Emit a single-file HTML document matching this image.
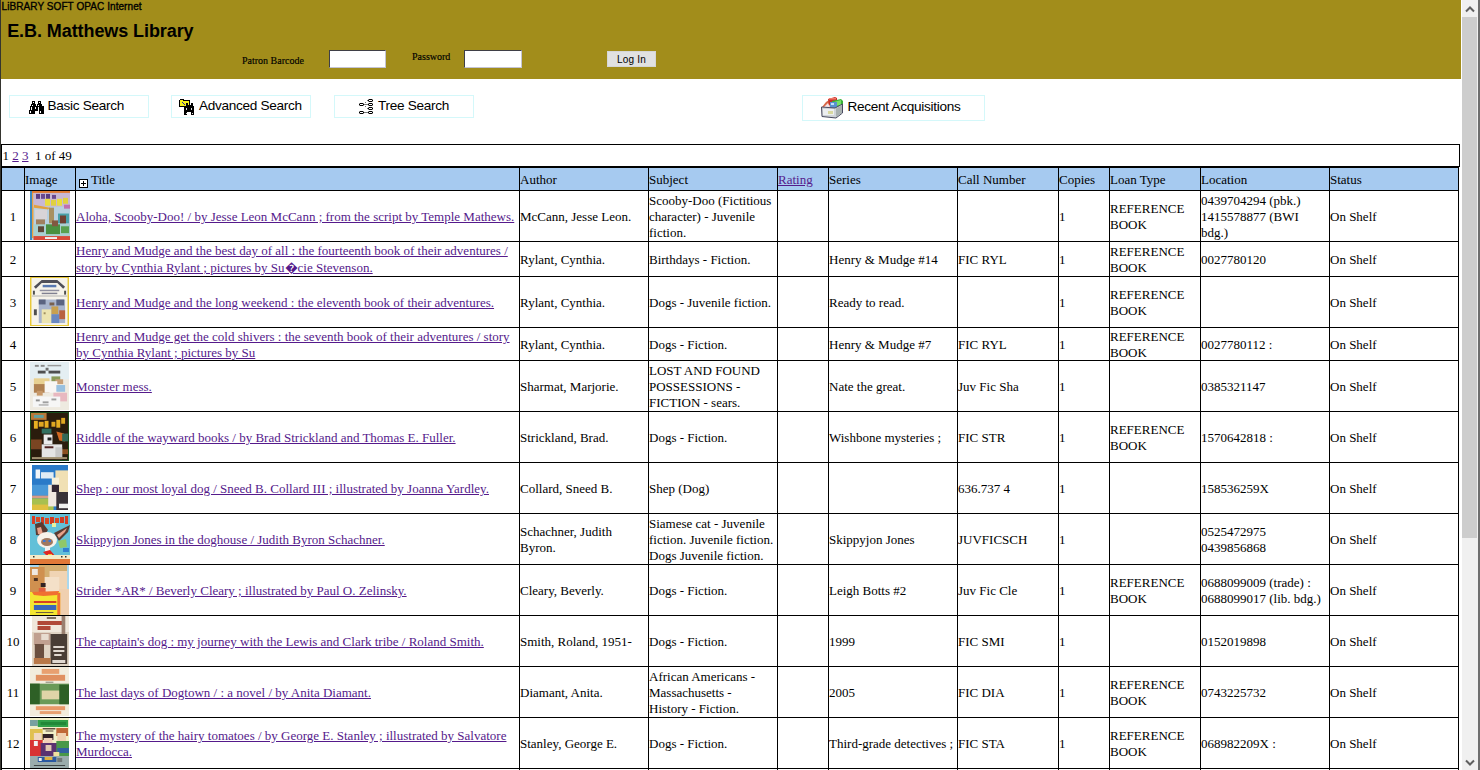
<!DOCTYPE html>
<html><head><meta charset="utf-8"><title>E.B. Matthews Library</title>
<style>
html,body{margin:0;padding:0;background:#fff;overflow:hidden;width:1480px;height:770px;}
body{position:relative;font-family:"Liberation Serif",serif;color:#000;}
.abs{position:absolute;}
#strip{left:0;top:0;width:1px;height:770px;background:#35352f;}
#hdr{left:1px;top:0;width:1460px;height:79px;background:#a28d1b;}
.sans{font-family:"Liberation Sans",sans-serif;}
#opac{left:1.6px;top:1px;font:10px/12px "Liberation Sans",sans-serif;letter-spacing:0.07px;-webkit-text-stroke:0.35px #000;white-space:nowrap;}
#lib{left:7.2px;top:20px;font:bold 18px/22px "Liberation Sans",sans-serif;letter-spacing:-0.08px;white-space:nowrap;}
.lbl{font:10px/12px "Liberation Serif",serif;white-space:nowrap;-webkit-text-stroke:0.15px #000;}
.inp{background:#fff;box-sizing:border-box;width:57px;height:18px;border-top:1px solid #3f3f46;border-left:1px solid #3f3f46;border-bottom:1px solid #c4c4d4;border-right:1px solid #c4c4d4;}
#btn{left:607px;top:51px;width:49px;height:16px;background:#e1e1e1;box-sizing:border-box;border:1px solid #d6d6d6;font:10px/15px "Liberation Sans",sans-serif;letter-spacing:0.2px;text-align:center;}
.sb{box-sizing:border-box;border:1px solid #d4f8fa;height:23px;font:13.6px/15px "Liberation Sans",sans-serif;letter-spacing:-0.3px;white-space:nowrap;}
.sb span{position:absolute;top:2px;}
.sb svg{position:absolute;}
#pager{left:1px;top:144px;width:1459px;height:23px;box-sizing:border-box;border:1px solid #000;font:13px/16px "Liberation Serif",serif;white-space:pre;}
#pager span{position:absolute;left:0.5px;top:3px;}
a{color:#551a8b;text-decoration:underline;}
#tbl{position:absolute;left:1px;top:167px;border-collapse:separate;border-spacing:0;table-layout:fixed;width:1458px;border-left:1px solid #000;border-top:1px solid #000;font:13px/16px "Liberation Serif",serif;}
#tbl td,#tbl th{box-sizing:border-box;padding:0;border-right:1px solid #000;border-bottom:1px solid #000;vertical-align:middle;text-align:left;white-space:nowrap;overflow:visible;font-weight:normal;}
#tbl th{background:#a6caf0;padding-top:2px;}
#tbl td.n{text-align:center;}
#tbl span.t{position:relative;top:1px;}
#tbl td.im{text-align:left;vertical-align:top;line-height:0;}
#tbl td.im svg{display:block;}
#sbar{left:1461px;top:0;width:19px;height:770px;background:#fff;}
#track{left:1462px;top:0;width:16px;height:770px;background:#f0f0f0;}
#thumb{left:1462px;top:17px;width:15px;height:521px;background:#cdcdcd;}
#sedge{left:1478px;top:0;width:2px;height:770px;background:#6e6e6e;}
</style></head><body>
<svg width="0" height="0" style="position:absolute"><defs><filter id="bl" x="0" y="0" width="100%" height="100%"><feGaussianBlur stdDeviation="0.6" edgeMode="duplicate"/></filter></defs></svg>
<div id="hdr" class="abs"></div>
<div id="opac" class="abs">LiBRARY SOFT OPAC Internet</div>
<div id="lib" class="abs">E.B. Matthews Library</div>
<div class="abs lbl" style="left:242px;top:55px;">Patron Barcode</div>
<div class="abs inp" style="left:329px;top:50px;"></div>
<div class="abs lbl" style="left:412px;top:51px;">Password</div>
<div class="abs inp" style="left:464px;top:50px;width:58px;"></div>
<div id="btn" class="abs">Log In</div>

<div class="abs sb" style="left:9px;top:95px;width:140px;">
<svg style="left:19px;top:5px" width="15" height="13" viewBox="0 0 15 13" shape-rendering="crispEdges">
<g fill="#000"><rect x="3" y="0" width="3" height="3"/><rect x="2" y="3" width="5" height="2"/><rect x="1" y="5" width="6" height="4"/><rect x="0" y="9" width="6" height="4"/><rect x="9" y="0" width="3" height="3"/><rect x="8" y="3" width="5" height="2"/><rect x="8" y="5" width="7" height="4"/><rect x="10" y="9" width="5" height="4"/><rect x="6" y="5" width="3" height="5"/></g>
<g fill="#fff"><rect x="4" y="1" width="1" height="1"/><rect x="10" y="1" width="1" height="1"/><rect x="3" y="4" width="1" height="1"/><rect x="9" y="4" width="1" height="1"/><rect x="2" y="6" width="1" height="3"/><rect x="6" y="6" width="1" height="2"/><rect x="9" y="6" width="1" height="3"/><rect x="1" y="10" width="1" height="2"/><rect x="11" y="10" width="1" height="2"/></g>
</svg>
<span style="left:37.5px">Basic Search</span></div>

<div class="abs sb" style="left:171px;top:95px;width:140px;">
<svg style="left:7px;top:3px" width="17" height="16" viewBox="0 0 17 16" shape-rendering="crispEdges">
<path fill="#000" d="M1 0h4v1h6v7h-11v-7h1z"/>
<path fill="#f2ee1a" d="M1 1h3v1h6v5h-9z"/>
<path fill="#2222aa" d="M3 3h1v1h-1zM4 4h1v1h-1zM5 5h1v1h-1z"/>
<path fill="#000" d="M7 4h2v2h3v-2h2v3h1v9h-3v-3h-4v3h-3v-9h2z"/>
<path fill="#ddd" d="M7 9h1v2h-1zM12 9h1v2h-1zM7 14h1v1h-1zM13 14h1v1h-1z"/>
</svg>
<span style="left:27px">Advanced Search</span></div>

<div class="abs sb" style="left:334px;top:95px;width:140px;">
<svg style="left:24px;top:3px" width="14" height="15" viewBox="0 0 14 15" shape-rendering="crispEdges">
<g fill="#000"><rect x="0" y="4" width="5" height="3"/><rect x="0" y="12" width="5" height="3"/><rect x="9" y="0" width="5" height="3"/><rect x="9" y="4" width="5" height="3"/><rect x="9" y="8" width="5" height="3"/><rect x="9" y="12" width="5" height="3"/></g>
<g fill="#fff"><rect x="1" y="5" width="3" height="1"/><rect x="1" y="13" width="3" height="1"/><rect x="10" y="1" width="3" height="1"/><rect x="10" y="5" width="3" height="1"/><rect x="10" y="9" width="3" height="1"/><rect x="10" y="13" width="3" height="1"/></g>
<g fill="#fff" opacity="0.55"><rect x="0" y="4" width="1" height="1"/><rect x="4" y="4" width="1" height="1"/><rect x="0" y="6" width="1" height="1"/><rect x="4" y="6" width="1" height="1"/><rect x="0" y="12" width="1" height="1"/><rect x="4" y="12" width="1" height="1"/><rect x="0" y="14" width="1" height="1"/><rect x="4" y="14" width="1" height="1"/><rect x="9" y="0" width="1" height="1"/><rect x="13" y="0" width="1" height="1"/><rect x="9" y="2" width="1" height="1"/><rect x="13" y="2" width="1" height="1"/><rect x="9" y="4" width="1" height="1"/><rect x="13" y="4" width="1" height="1"/><rect x="9" y="6" width="1" height="1"/><rect x="13" y="6" width="1" height="1"/><rect x="9" y="8" width="1" height="1"/><rect x="13" y="8" width="1" height="1"/><rect x="9" y="10" width="1" height="1"/><rect x="13" y="10" width="1" height="1"/><rect x="9" y="12" width="1" height="1"/><rect x="13" y="12" width="1" height="1"/><rect x="9" y="14" width="1" height="1"/><rect x="13" y="14" width="1" height="1"/></g>
<g fill="#777"><rect x="5" y="5" width="4" height="1"/><rect x="5" y="13" width="4" height="1"/><rect x="6" y="3" width="1" height="1"/><rect x="8" y="1" width="1" height="1"/><rect x="6" y="7" width="1" height="1"/><rect x="8" y="9" width="1" height="1"/></g>
</svg>
<span style="left:43px">Tree Search</span></div>

<div class="abs sb" style="left:802px;top:95px;width:183px;height:26px;">
<svg style="left:17px;top:1px" width="24" height="22" viewBox="0 0 24 22">
<polygon points="2,10 6,5 9,3 10,10" fill="#d86848"/><polygon points="4,10 8,6 10,10" fill="#f4e4e8"/>
<polygon points="8,2 15,0 17,1 17,7 9,8" fill="#c83028"/><rect x="9" y="1" width="7" height="1.5" fill="#f07868"/>
<polygon points="12,4 21,2 23,4 23,12 13,12" fill="#38b038"/><polygon points="14,5 21,3 21,8 14,9" fill="#78e068"/>
<rect x="10" y="5" width="7" height="7" fill="#5a90d0"/><rect x="11" y="6" width="3" height="2" fill="#c0e0f8"/>
<polygon points="1.5,10 15,11 22.5,7 22.5,16 16,21 2,19.5" fill="#d0d4d8" stroke="#4a4a60" stroke-width="1"/>
<polygon points="16,11.5 22,8 22,16 16,20" fill="#a8b0b0"/>
<rect x="3" y="12" width="11" height="6" fill="#eceef0"/><rect x="8" y="14" width="5" height="3" fill="#d8d8a0"/>
</svg>
<span style="left:44.5px;top:3px">Recent Acquisitions</span></div>

<div id="pager" class="abs"><span>1 <a>2</a> <a>3</a>  1 of 49</span></div>

<table id="tbl">
<colgroup><col style="width:23px"><col style="width:51px"><col style="width:444px"><col style="width:129px"><col style="width:129px"><col style="width:51px"><col style="width:129px"><col style="width:101px"><col style="width:51px"><col style="width:91px"><col style="width:129px"><col style="width:129px"></colgroup>
<tr style="height:23px"><th></th><th>Image</th><th><svg width="9" height="9" viewBox="0 0 9 9" style="vertical-align:-4px;margin:0 3px 0 3px" shape-rendering="crispEdges"><path fill="#000" d="M0 0h9v9h-9zM1 1v7h7v-7z"/><path fill="#fff" d="M1 1h7v7h-7z"/><path fill="#000" d="M4 2h1v5h-1zM2 4h5v1h-5z"/></svg>Title</th><th>Author</th><th>Subject</th><th><a>Rating</a></th><th>Series</th><th>Call Number</th><th>Copies</th><th>Loan Type</th><th>Location</th><th>Status</th></tr>
<tr style="height:51px"><td class="n"><span class="t">1</span></td><td class="im"><svg style="margin:0px 0 0 5px" width="40" height="49" viewBox="0 0 40 50" preserveAspectRatio="none"><g filter="url(#bl)"><rect width="40" height="50" fill="#b8d0e0"/><rect width="40" height="2" fill="#e07a30"/><rect x="0" y="0" width="2" height="50" fill="#3a8ac0"/><rect x="2" y="2" width="1.5" height="46" fill="#e8a040"/><rect x="3.5" y="2" width="36.5" height="14" fill="#c8b8d4"/><rect x="6" y="3" width="4" height="5" fill="#5a3a80"/><rect x="11" y="3" width="4" height="5" fill="#6a4a90"/><rect x="16" y="3" width="4" height="5" fill="#5a3a80"/><rect x="22" y="4" width="4" height="4" fill="#6a4a90"/><rect x="15" y="8" width="5" height="7" fill="#e8dc40"/><rect x="21" y="9" width="5" height="6" fill="#e0d040"/><rect x="27" y="8" width="5" height="7" fill="#e8dc40"/><rect x="33" y="7" width="5" height="6" fill="#e0d040"/><polygon points="4,14 20,17 18,19 4,17" fill="#e0a040"/><rect x="34" y="14" width="6" height="4" fill="#c070b0"/><rect x="5" y="19" width="12" height="10" fill="#d8d4d8"/><rect x="19" y="17" width="5" height="16" fill="#a89060"/><rect x="6" y="29" width="9" height="7" fill="#a08060"/><rect x="28" y="23" width="11" height="10" fill="#48a0a8"/><rect x="30" y="25" width="6" height="8" fill="#704030"/><rect x="3.5" y="34" width="36.5" height="12" fill="#a8d0d0"/><rect x="16" y="34" width="14" height="10" fill="#4a9040"/><rect x="31" y="36" width="8" height="7" fill="#58a050"/><rect x="8" y="36" width="6" height="6" fill="#604838"/><rect x="22" y="30" width="6" height="6" fill="#805840"/><rect x="3.5" y="46" width="36.5" height="4" fill="#d84838"/><rect x="15" y="47" width="12" height="2" fill="#f0f0f0"/></g></svg></td><td><span class="t"><a>Aloha, Scooby-Doo! / by Jesse Leon McCann ; from the script by Temple Mathews.</a></span></td><td><span class="t">McCann, Jesse Leon.</span></td><td><span class="t">Scooby-Doo (Fictitious<br>character) - Juvenile<br>fiction.</span></td><td></td><td></td><td></td><td><span class="t">1</span></td><td><span class="t">REFERENCE<br>BOOK</span></td><td><span class="t">0439704294 (pbk.)<br>1415578877 (BWI<br>bdg.)</span></td><td><span class="t">On Shelf</span></td></tr>
<tr style="height:35px"><td class="n"><span class="t">2</span></td><td class="im"></td><td style="line-height:17px"><a>Henry and Mudge and the best day of all : the fourteenth book of their adventures /<br>story by Cynthia Rylant ; pictures by Su&#xFFFD;cie Stevenson.</a></td><td><span class="t">Rylant, Cynthia.</span></td><td><span class="t">Birthdays - Fiction.</span></td><td></td><td><span class="t">Henry &amp; Mudge #14</span></td><td><span class="t">FIC RYL</span></td><td><span class="t">1</span></td><td><span class="t">REFERENCE<br>BOOK</span></td><td><span class="t">0027780120</span></td><td><span class="t">On Shelf</span></td></tr>
<tr style="height:51px"><td class="n"><span class="t">3</span></td><td class="im"><svg style="margin:0px 0 0 5px" width="39" height="49" viewBox="0 0 40 50" preserveAspectRatio="none"><g filter="url(#bl)"><rect width="40" height="50" fill="#e8c838"/><rect x="1.5" y="1" width="37" height="48" fill="#f6f3ea"/><polygon points="4,10 12,3 28,3 36,10 34,12 28,6 12,6 6,12" fill="#505058"/><rect x="14" y="4" width="12" height="2" fill="#505058"/><rect x="13" y="8" width="14" height="2.5" fill="#5878b0"/><rect x="10" y="13" width="20" height="1.5" fill="#9090a0"/><rect x="12" y="16" width="16" height="1.5" fill="#808090"/><rect x="3" y="14" width="2" height="4" fill="#505050"/><rect x="35" y="14" width="2" height="4" fill="#505050"/><rect x="2" y="19" width="36" height="0.8" fill="#a0a0a0"/><rect x="9" y="23" width="27" height="24" fill="#a8b4cc"/><rect x="9" y="23" width="7" height="5" fill="#5a6480"/><rect x="27" y="23" width="8" height="6" fill="#5a6480"/><rect x="20" y="26" width="5" height="3" fill="#786050"/><rect x="12" y="33" width="10" height="14" fill="#ece4b0"/><rect x="14" y="36" width="2" height="2" fill="#a09060"/><rect x="22" y="30" width="7" height="8" fill="#c8a050"/><rect x="22" y="38" width="8" height="9" fill="#6a88c0"/><rect x="30" y="34" width="6" height="9" fill="#b86040"/><rect x="4" y="33" width="3" height="6" fill="#505050"/></g></svg></td><td><span class="t"><a>Henry and Mudge and the long weekend : the eleventh book of their adventures.</a></span></td><td><span class="t">Rylant, Cynthia.</span></td><td><span class="t">Dogs - Juvenile fiction.</span></td><td></td><td><span class="t">Ready to read.</span></td><td></td><td><span class="t">1</span></td><td><span class="t">REFERENCE<br>BOOK</span></td><td></td><td><span class="t">On Shelf</span></td></tr>
<tr style="height:33px"><td class="n"><span class="t">4</span></td><td class="im"></td><td><span class="t"><a>Henry and Mudge get the cold shivers : the seventh book of their adventures / story<br>by Cynthia Rylant ; pictures by Su</a></span></td><td><span class="t">Rylant, Cynthia.</span></td><td><span class="t">Dogs - Fiction.</span></td><td></td><td><span class="t">Henry &amp; Mudge #7</span></td><td><span class="t">FIC RYL</span></td><td><span class="t">1</span></td><td><span class="t">REFERENCE<br>BOOK</span></td><td><span class="t">0027780112 :</span></td><td><span class="t">On Shelf</span></td></tr>
<tr style="height:51px"><td class="n"><span class="t">5</span></td><td class="im"><svg style="margin:1px 0 0 5px" width="39" height="48" viewBox="0 0 40 50" preserveAspectRatio="none"><g filter="url(#bl)"><rect width="40" height="50" fill="#eeeae0"/><rect x="0" y="0" width="40" height="18" fill="#e4eef2"/><rect x="5" y="3" width="4" height="2" fill="#8a8a8a"/><rect x="11" y="3" width="4" height="2" fill="#8a8a8a"/><rect x="18" y="3" width="14" height="1.5" fill="#9a9a9a"/><rect x="8" y="9" width="8" height="3" fill="#505050"/><rect x="19" y="9" width="12" height="3" fill="#505050"/><rect x="16" y="6" width="3" height="3" fill="#707070"/><rect x="4" y="17" width="16" height="7" fill="#e8d090"/><rect x="22" y="15" width="9" height="6" fill="#8a9a58"/><rect x="26" y="18" width="8" height="5" fill="#c8a078"/><rect x="4" y="23" width="16" height="9" fill="#b08050"/><rect x="7" y="30" width="6" height="5" fill="#c89868"/><rect x="15" y="20" width="13" height="12" fill="#f8f6f4"/><rect x="27" y="24" width="9" height="7" fill="#98c0e0"/><rect x="24" y="32" width="14" height="9" fill="#e8b8c0"/><rect x="3" y="36" width="28" height="11" fill="#f6f6f6"/><rect x="6" y="39" width="4" height="2" fill="#909090"/><rect x="13" y="41" width="6" height="2" fill="#a0a0a0"/><rect x="22" y="38" width="5" height="2" fill="#a0a0a0"/><rect x="9" y="44" width="10" height="1.5" fill="#b0b0b0"/></g></svg></td><td><span class="t"><a>Monster mess.</a></span></td><td><span class="t">Sharmat, Marjorie.</span></td><td><span class="t">LOST AND FOUND<br>POSSESSIONS -<br>FICTION - sears.</span></td><td></td><td><span class="t">Nate the great.</span></td><td><span class="t">Juv Fic Sha</span></td><td><span class="t">1</span></td><td></td><td><span class="t">0385321147</span></td><td><span class="t">On Shelf</span></td></tr>
<tr style="height:51px"><td class="n"><span class="t">6</span></td><td class="im"><svg style="margin:0px 0 0 5px" width="39" height="49" viewBox="0 0 40 50" preserveAspectRatio="none"><g filter="url(#bl)"><rect width="40" height="50" fill="#1a5020"/><rect x="1" y="1" width="38" height="48" fill="#2a1c10"/><rect x="1" y="1" width="16" height="7" fill="#b87838"/><rect x="4" y="3" width="10" height="3" fill="#60a0a0"/><rect x="4" y="9" width="4" height="8" fill="#e8b020"/><rect x="9" y="10" width="5" height="5" fill="#e0a820"/><rect x="15" y="9" width="4" height="7" fill="#e8b020"/><rect x="22" y="10" width="4" height="5" fill="#e0a820"/><rect x="27" y="8" width="4" height="8" fill="#e8b020"/><rect x="32" y="6" width="4" height="6" fill="#e0a820"/><rect x="12" y="17" width="10" height="5" fill="#307060"/><polygon points="27,20 35,22 36,30 30,29" fill="#d06820"/><rect x="33" y="22" width="6" height="8" fill="#306858"/><rect x="1" y="28" width="11" height="10" fill="#7a4420"/><rect x="30" y="38" width="9" height="5" fill="#8a5020"/><rect x="14" y="23" width="9" height="10" fill="#ececec"/><rect x="18" y="26" width="4" height="3" fill="#202020"/><rect x="12" y="33" width="21" height="15" fill="#e4e4e4"/><rect x="15" y="35" width="9" height="2" fill="#502020"/><rect x="26" y="36" width="7" height="12" fill="#c8c8c8"/><rect x="2" y="46" width="36" height="2" fill="#a09070"/></g></svg></td><td><span class="t"><a>Riddle of the wayward books / by Brad Strickland and Thomas E. Fuller.</a></span></td><td><span class="t">Strickland, Brad.</span></td><td><span class="t">Dogs - Fiction.</span></td><td></td><td><span class="t">Wishbone mysteries ;</span></td><td><span class="t">FIC STR</span></td><td><span class="t">1</span></td><td><span class="t">REFERENCE<br>BOOK</span></td><td><span class="t">1570642818 :</span></td><td><span class="t">On Shelf</span></td></tr>
<tr style="height:51px"><td class="n"><span class="t">7</span></td><td class="im"><svg style="margin:2px 0 0 7px" width="36" height="45" viewBox="0 0 40 50" preserveAspectRatio="none"><g filter="url(#bl)"><rect width="40" height="50" fill="#2a7ac8"/><rect x="0" y="22" width="30" height="12" fill="#4a98d8"/><rect x="4" y="5" width="5" height="10" fill="#f0f4f8"/><rect x="10" y="8" width="14" height="7" fill="#e0ecf4"/><rect x="26" y="6" width="14" height="30" fill="#f0e0b4"/><rect x="22" y="14" width="8" height="8" fill="#f8f0d8"/><rect x="0" y="34" width="24" height="3" fill="#d89c88"/><rect x="0" y="37" width="24" height="13" fill="#a8c050"/><rect x="0" y="44" width="18" height="6" fill="#e0c040"/><rect x="18" y="22" width="10" height="24" fill="#f0e8e0"/><rect x="22" y="22" width="8" height="8" fill="#302830"/><rect x="27" y="30" width="13" height="20" fill="#383038"/><rect x="30" y="43" width="10" height="5" fill="#f0f0f0"/></g></svg></td><td><span class="t"><a>Shep : our most loyal dog / Sneed B. Collard III ; illustrated by Joanna Yardley.</a></span></td><td><span class="t">Collard, Sneed B.</span></td><td><span class="t">Shep (Dog)</span></td><td></td><td></td><td><span class="t">636.737 4</span></td><td><span class="t">1</span></td><td></td><td><span class="t">158536259X</span></td><td><span class="t">On Shelf</span></td></tr>
<tr style="height:51px"><td class="n"><span class="t">8</span></td><td class="im"><svg style="margin:0px 0 0 5px" width="40" height="50" viewBox="0 0 40 50" preserveAspectRatio="none"><g filter="url(#bl)"><rect width="40" height="50" fill="#62c0d8"/><rect x="2" y="2" width="3" height="8" fill="#d83a20"/><rect x="6" y="3" width="4" height="5" fill="#d84a28"/><rect x="11" y="3" width="3" height="7" fill="#d03a20"/><rect x="15" y="4" width="4" height="6" fill="#d84a28"/><rect x="20" y="3" width="4" height="7" fill="#d03a20"/><rect x="25" y="4" width="4" height="5" fill="#d84a28"/><rect x="30" y="3" width="4" height="6" fill="#d03a20"/><rect x="35" y="2" width="3" height="8" fill="#d83a20"/><rect x="22" y="9" width="4" height="4" fill="#e8f0a0"/><polygon points="5,10 12,8 18,16 14,22 6,21" fill="#5a3a30"/><polygon points="7,14 11,13 13,20 8,20" fill="#e8a088"/><polygon points="24,19 40,11 38,18 29,27" fill="#5a3a30"/><polygon points="27,21 37,14 35,18 29,24" fill="#e8a088"/><ellipse cx="17" cy="26" rx="10" ry="8" fill="#f8f2ea"/><ellipse cx="17" cy="28" rx="6" ry="4" fill="#a07860"/><rect x="13" y="26" width="2.5" height="2" fill="#3a78d8"/><rect x="18.5" y="26" width="2.5" height="2" fill="#3a78d8"/><rect x="15" y="33" width="5" height="4" fill="#f0f0f0"/><polygon points="28,27 36,25 37,33 30,34" fill="#90c868"/><rect x="33" y="34" width="6" height="4" fill="#3080d0"/><polygon points="13,38 20,36 27,44 22,47" fill="#e02820"/><rect x="18" y="40" width="4" height="3" fill="#f0c030"/><rect x="0" y="41" width="40" height="4" fill="#f4ecc8"/><rect x="3" y="42" width="1.5" height="1.5" fill="#303030"/><rect x="31" y="42" width="1.5" height="1.5" fill="#303030"/><rect x="35" y="42" width="1.5" height="1.5" fill="#303030"/><rect x="0" y="45" width="40" height="5" fill="#e07838"/></g></svg></td><td><span class="t"><a>Skippyjon Jones in the doghouse / Judith Byron Schachner.</a></span></td><td><span class="t">Schachner, Judith<br>Byron.</span></td><td><span class="t">Siamese cat - Juvenile<br>fiction. Juvenile fiction.<br>Dogs Juvenile fiction.</span></td><td></td><td><span class="t">Skippyjon Jones</span></td><td><span class="t">JUVFICSCH</span></td><td><span class="t">1</span></td><td></td><td><span class="t">0525472975<br>0439856868</span></td><td><span class="t">On Shelf</span></td></tr>
<tr style="height:51px"><td class="n"><span class="t">9</span></td><td class="im"><svg style="margin:0px 0 0 5px" width="39" height="50" viewBox="0 0 40 50" preserveAspectRatio="none"><g filter="url(#bl)"><rect width="40" height="50" fill="#a8d8f0"/><rect x="9" y="0" width="29" height="12" fill="#d4ae70"/><rect x="20" y="6" width="18" height="20" fill="#f0d4b4"/><rect x="13" y="12" width="17" height="15" fill="#f4e0c8"/><rect x="30" y="24" width="10" height="26" fill="#f0d0b0"/><rect x="0" y="2" width="15" height="26" fill="#d09050"/><rect x="2" y="4" width="6" height="6" fill="#f0e8e0"/><rect x="4" y="13" width="4" height="3" fill="#503020"/><rect x="11" y="18" width="5" height="4" fill="#302020"/><rect x="9" y="23" width="7" height="4" fill="#e06040"/><rect x="0" y="27" width="31" height="23" fill="#f4e630"/><polygon points="2,27 30,26 28,30 14,31 4,30" fill="#f07030"/><rect x="28" y="28" width="3" height="22" fill="#f07030"/><rect x="4" y="36" width="23" height="2" fill="#d84020"/><rect x="4" y="40" width="23" height="5" fill="#3a66b8"/><rect x="6" y="47" width="18" height="1" fill="#706040"/></g></svg></td><td><span class="t"><a>Strider *AR* / Beverly Cleary ; illustrated by Paul O. Zelinsky.</a></span></td><td><span class="t">Cleary, Beverly.</span></td><td><span class="t">Dogs - Fiction.</span></td><td></td><td><span class="t">Leigh Botts #2</span></td><td><span class="t">Juv Fic Cle</span></td><td><span class="t">1</span></td><td><span class="t">REFERENCE<br>BOOK</span></td><td><span class="t">0688099009 (trade) :<br>0688099017 (lib. bdg.)</span></td><td><span class="t">On Shelf</span></td></tr>
<tr style="height:51px"><td class="n"><span class="t">10</span></td><td class="im"><svg style="margin:0px 0 0 7px" width="37" height="50" viewBox="0 0 40 50" preserveAspectRatio="none"><g filter="url(#bl)"><rect width="40" height="50" fill="#e0d4c4"/><rect x="0" y="0" width="40" height="16" fill="#f0e8dc"/><rect x="16" y="1" width="10" height="2" fill="#807060"/><rect x="6" y="5" width="28" height="4" fill="#b04838"/><rect x="6" y="10" width="14" height="4" fill="#b04838"/><rect x="32" y="0" width="4" height="22" fill="#9a8070"/><rect x="2" y="17" width="18" height="12" fill="#c0a090"/><rect x="10" y="18" width="8" height="6" fill="#e8dcd0"/><rect x="3" y="28" width="10" height="14" fill="#6a5040"/><rect x="20" y="18" width="18" height="30" fill="#4a3c34"/><rect x="23" y="30" width="12" height="2" fill="#e0d8d0"/><rect x="23" y="34" width="12" height="2" fill="#e0d8d0"/><rect x="24" y="38" width="8" height="2" fill="#e0d8d0"/><rect x="2" y="42" width="18" height="6" fill="#b87848"/><rect x="22" y="44" width="14" height="3" fill="#e0d8d0"/></g></svg></td><td><span class="t"><a>The captain's dog : my journey with the Lewis and Clark tribe / Roland Smith.</a></span></td><td><span class="t">Smith, Roland, 1951-</span></td><td><span class="t">Dogs - Fiction.</span></td><td></td><td><span class="t">1999</span></td><td><span class="t">FIC SMI</span></td><td><span class="t">1</span></td><td></td><td><span class="t">0152019898</span></td><td><span class="t">On Shelf</span></td></tr>
<tr style="height:51px"><td class="n"><span class="t">11</span></td><td class="im"><svg style="margin:0px 0 0 5px" width="39" height="49" viewBox="0 0 40 50" preserveAspectRatio="none"><g filter="url(#bl)"><rect width="40" height="50" fill="#f2ecdc"/><rect x="12" y="2" width="18" height="5" fill="#e8a070"/><rect x="6" y="8" width="30" height="6" fill="#e09060"/><rect x="16" y="15" width="8" height="1" fill="#808070"/><rect x="0" y="17" width="40" height="21" fill="#6a9a58"/><rect x="12" y="24" width="20" height="9" fill="#e0d4a8"/><rect x="0" y="17" width="10" height="21" fill="#2e6028"/><rect x="30" y="18" width="10" height="20" fill="#2e6028"/><rect x="6" y="40" width="30" height="4" fill="#e89868"/><rect x="10" y="45" width="22" height="3" fill="#e8a070"/></g></svg></td><td><span class="t"><a>The last days of Dogtown / : a novel / by Anita Diamant.</a></span></td><td><span class="t">Diamant, Anita.</span></td><td><span class="t">African Americans -<br>Massachusetts -<br>History - Fiction.</span></td><td></td><td><span class="t">2005</span></td><td><span class="t">FIC DIA</span></td><td><span class="t">1</span></td><td><span class="t">REFERENCE<br>BOOK</span></td><td><span class="t">0743225732</span></td><td><span class="t">On Shelf</span></td></tr>
<tr style="height:51px"><td class="n"><span class="t">12</span></td><td class="im"><svg style="margin:0px 0 0 5px" width="39" height="50" viewBox="0 0 40 50" preserveAspectRatio="none"><g filter="url(#bl)"><rect width="40" height="50" fill="#f2f0c8"/><rect x="0" y="2" width="8" height="6" fill="#78a0a0"/><rect x="8" y="2" width="31" height="7" fill="#30a048"/><rect x="11" y="4" width="26" height="3" fill="#208838"/><rect x="13" y="10" width="13" height="1.5" fill="#605040"/><rect x="16" y="12.5" width="8" height="1" fill="#605040"/><rect x="0" y="11" width="13" height="12" fill="#e0c050"/><rect x="4" y="15" width="8" height="8" fill="#f0d8c0"/><rect x="0" y="22" width="13" height="17" fill="#d83030"/><rect x="4" y="23" width="4" height="5" fill="#f0f0f0"/><rect x="13" y="16" width="11" height="6" fill="#302028"/><rect x="14" y="20" width="9" height="6" fill="#f0d0b8"/><rect x="11" y="25" width="17" height="15" fill="#5a3070"/><rect x="16" y="27" width="6" height="6" fill="#e0c8b0"/><rect x="27" y="10" width="12" height="8" fill="#c06838"/><rect x="28" y="15" width="9" height="8" fill="#f0d0b0"/><rect x="27" y="23" width="13" height="15" fill="#4a9848"/><rect x="28" y="30" width="12" height="5" fill="#3060a0"/><rect x="24" y="34" width="6" height="4" fill="#f0e0a0"/><rect x="0" y="38" width="40" height="12" fill="#9aacac"/><rect x="8" y="39" width="19" height="5" fill="#2a58a0"/><rect x="9" y="40" width="3" height="3" fill="#f0f0f0"/><rect x="15" y="39" width="8" height="3" fill="#e0b040"/><rect x="28" y="40" width="5" height="4" fill="#707878"/><rect x="4" y="47" width="32" height="1" fill="#404848"/></g></svg></td><td><span class="t"><a>The mystery of the hairy tomatoes / by George E. Stanley ; illustrated by Salvatore<br>Murdocca.</a></span></td><td><span class="t">Stanley, George E.</span></td><td><span class="t">Dogs - Fiction.</span></td><td></td><td><span class="t">Third-grade detectives ;</span></td><td><span class="t">FIC STA</span></td><td><span class="t">1</span></td><td><span class="t">REFERENCE<br>BOOK</span></td><td><span class="t">068982209X :</span></td><td><span class="t">On Shelf</span></td></tr>
<tr style="height:40px"><td class="n">13</td><td></td><td></td><td></td><td></td><td></td><td></td><td></td><td></td><td></td><td></td><td></td></tr>
</table>

<div id="sbar" class="abs"></div>
<div id="track" class="abs"></div>
<div id="thumb" class="abs"></div>
<div id="sedge" class="abs"></div>
<svg class="abs" style="left:1462px;top:0" width="16" height="17" viewBox="0 0 16 17"><path d="M4 11.5L8 7.5L12 11.5" fill="none" stroke="#606060" stroke-width="2"/></svg>
<svg class="abs" style="left:1462px;top:753px" width="16" height="17" viewBox="0 0 16 17"><path d="M4 7.5L8 11.5L12 7.5" fill="none" stroke="#606060" stroke-width="2"/></svg>
<div id="strip" class="abs"></div>
</body></html>
